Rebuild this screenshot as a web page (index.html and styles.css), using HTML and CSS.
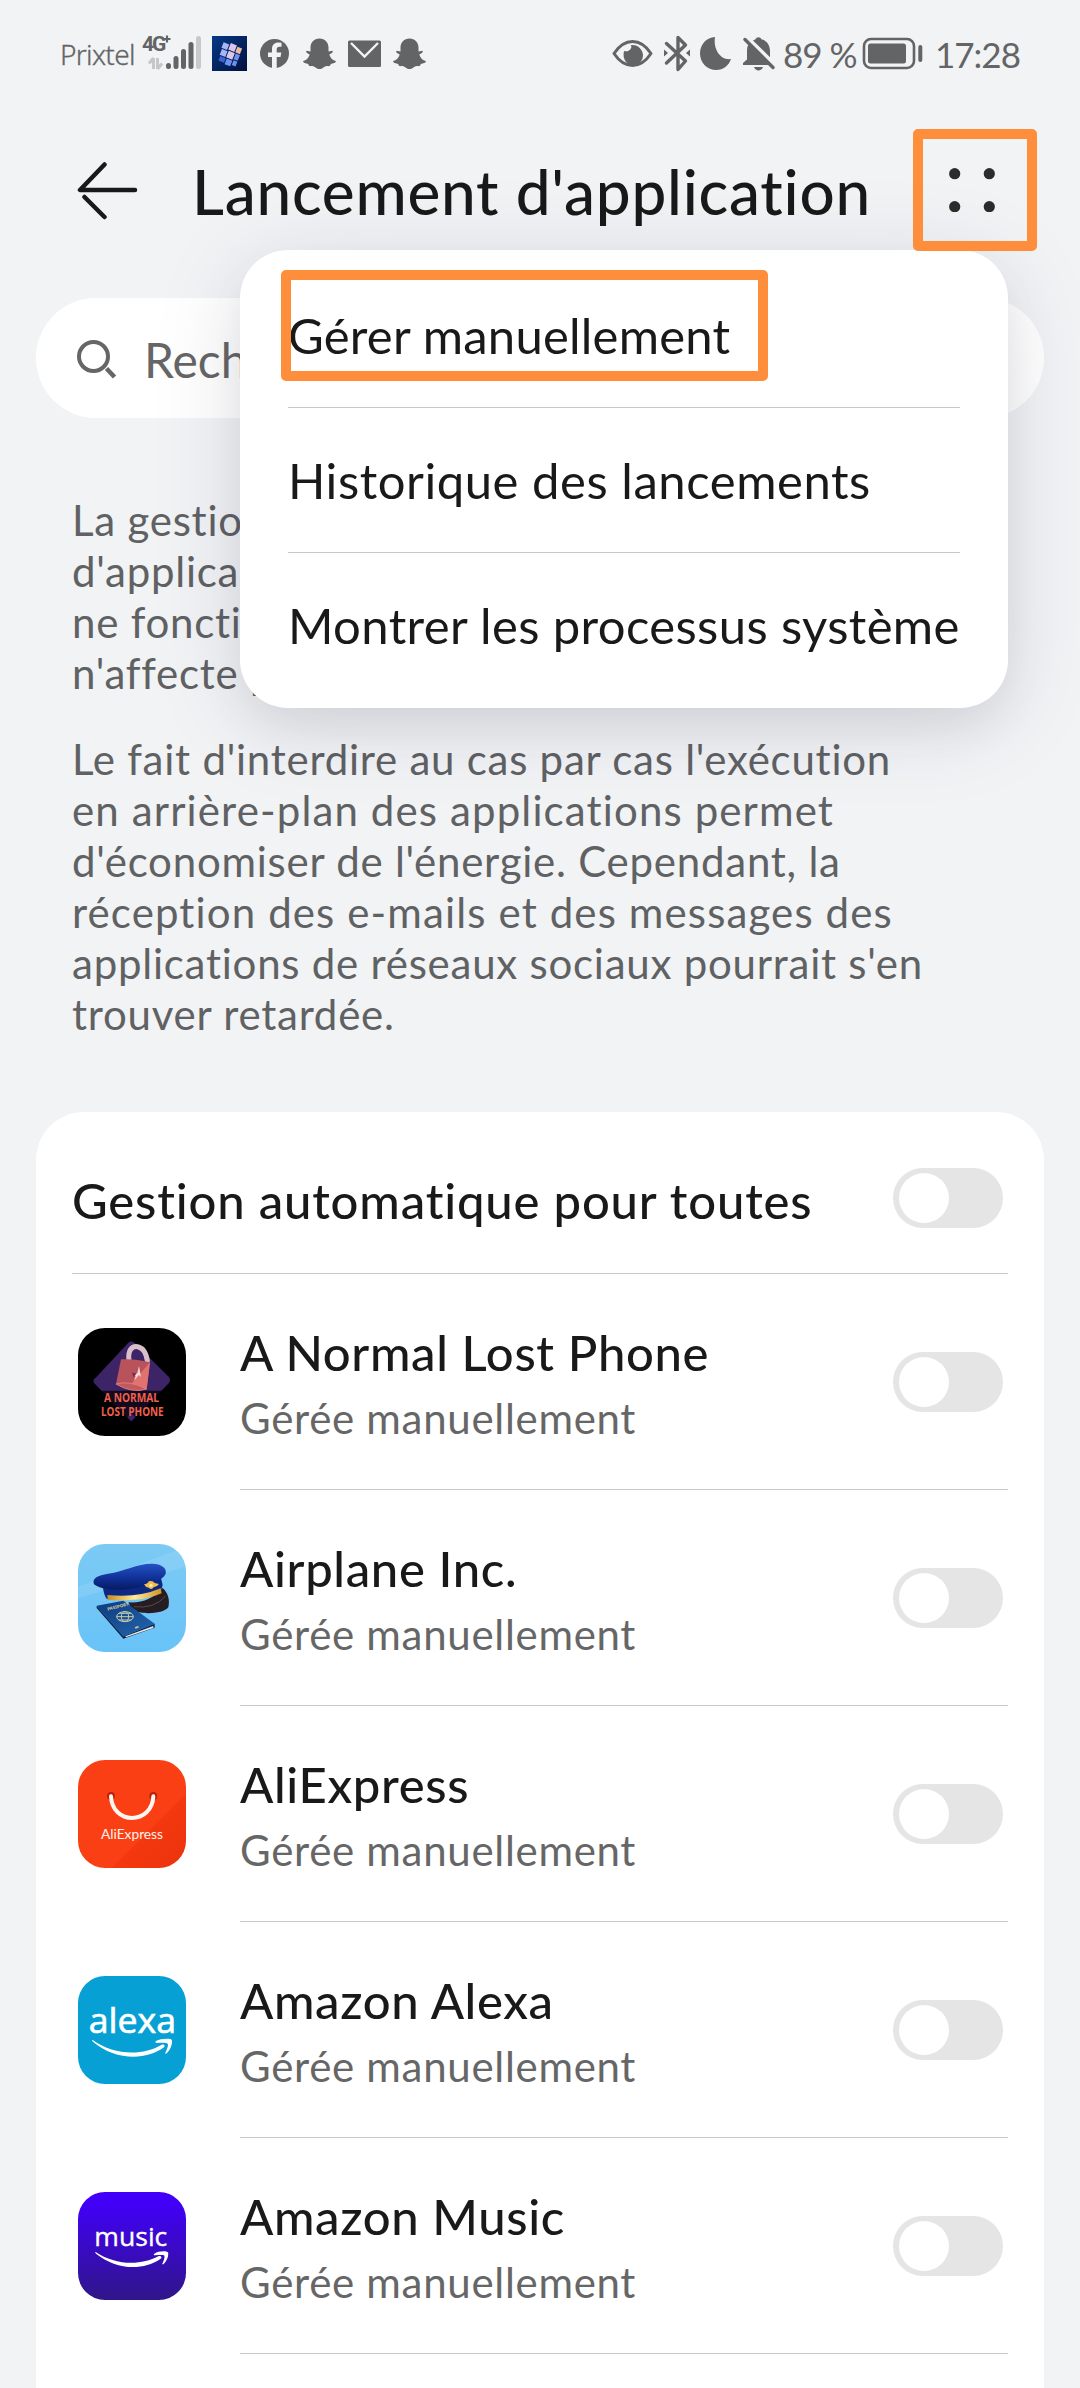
FILE: index.html
```html
<!DOCTYPE html>
<html lang="fr">
<head>
<meta charset="utf-8">
<title>Lancement d'application</title>
<link rel="stylesheet" href="styles.css">
</head>
<body>
<div class="screen">
  <div class="status">
    <span class="carrier">Prixtel</span>
    <svg width="62" height="48" viewBox="142 30 62 48">
      <text x="142" y="51" class="net">4G</text>
      <path d="M163.500 39h7M167 35.500v7" stroke="#636466" stroke-width="2.200"/>
      <path d="M153.500 58v11M149 63.500l4.500-5.500M157.500 58v11M162 63.500l-4.500 5.500" stroke="#c6c7c9" stroke-width="3" fill="none"/>
      <g stroke="#636466" stroke-width="5" stroke-linecap="round">
        <path d="M168.500 65.500v1M176 58.500v8M183.500 51.500v15M191 44.500v22"/><path d="M198.500 38.500v28" stroke="#c8c9cb"/>
      </g>
    </svg>
    <svg width="52" height="48" viewBox="204 30 52 48">
      <defs><linearGradient id="nb" x2="1" y2="1"><stop stop-color="#053a86"/><stop offset="1" stop-color="#02103c"/></linearGradient></defs>
      <path fill="url(#nb)" d="M212 36h35v35h-35z"/>
      <g transform="rotate(22 229 53)">
        <path fill="#a7b5f5" d="M220 45h6v6h-6zM221 52h6v6h-6z"/><path fill="#dcc6ea" d="M227 43h6.500v7H227zM228 51h6.500v7H228z"/><path fill="#f0b9a4" d="M234.500 44h5v6h-5z"/><path fill="#6d91ee" d="M235.500 51h4.500v6h-4.500zM229 59h6v6h-6zM236 58h4v5h-4z"/><path fill="#3e62d2" d="M222 59h6v5h-6z"/>
      </g>
    </svg>
    <svg width="40" height="48" viewBox="256 30 40 48">
      <circle cx="274.500" cy="53.500" r="14.500" fill="#636466"/>
      <path fill="#f1f3f5" d="M272 68.500V57h-4v-4.500h4v-3.500c0-4.300 2.500-6.500 6.300-6.500l3.200.3v4h-2c-2 0-2.800 1.100-2.800 2.500v3.200h4.600l-.8 4.500h-3.800v11.500z"/>
    </svg>
    <svg class="snap" width="46" height="48" viewBox="296 30 46 48"><path id="ghost" d="M319.500 38.500c5.500 0 9 4 9 9v4l3.800-.8c1.500 1-.3 2.700-3 3.700 1.200 4 3.500 5.700 6.500 6.700.3 2-3 2.500-5 3-.5 1-.4 1.800-1.400 2-2 .2-3.500-.4-5.200.8-1.500 1.200-3 2.100-4.700 2.100s-3.200-.9-4.700-2.100c-1.700-1.200-3.200-.6-5.200-.8-1-.2-.9-1-1.400-2-2-.5-5.300-1-5-3 3-1 5.300-2.700 6.500-6.700-2.700-1-4.500-2.700-3-3.700l3.800.8v-4c0-5 3.500-9 9-9z"/></svg>
    <svg width="46" height="48" viewBox="342 30 46 48">
      <rect x="348" y="40.500" width="33" height="26.500" rx="1.500" fill="#636466"/>
      <path d="M351 43l13.500 13.500L378 43" stroke="#f1f3f5" stroke-width="2.400" fill="none"/>
    </svg>
    <svg class="snap" width="46" height="48" viewBox="296 30 46 48"><use href="#ghost" x="-2"/></svg>
    <span class="spacer"></span>
    <svg width="172" height="48" viewBox="609 30 172 48" fill="none" stroke="#636466" stroke-width="3.400" stroke-linejoin="round" stroke-linecap="round">
      <path d="M614 53.500c5-7.500 11.500-12 18.500-12s13.500 4.500 18.500 12c-5 7.500-11.500 12-18.500 12s-13.500-4.500-18.500-12z" stroke-width="3"/>
      <path d="M631 45c1 3-.5 4.500-2 5.500s-3.500 1-5 .5c-2 8 3 14.500 9 14.500s10-5 10-10.500S637.500 44 631 45z" fill="#636466" stroke="none"/>
      <path d="M666.500 43.500l19 17.500-7.500 8.500v-32l7.500 7.500-19 18"/>
      <path d="M664 49.500v7l4-3.500zM690 49.500v7l-4-3.500z" fill="#636466" stroke="none"/>
      <path d="M715 37c-2 13 6 23.500 16 22-2 6.500-8 11-14.500 11-9.500 0-16.500-7.500-16.500-16.500S706.500 37.500 715 37z" fill="#636466" stroke="none"/>
      <path d="M743 65v-2l4-3.500V50c0-2 .5-4 1.500-6l21 21zM753 40.500l2.500-1.300c1-2.700 5-2.700 6 0 5.500 1.800 8.500 6.300 8.500 12v6zM754 67h9c-1.500 4.500-7.500 4.500-9 0z" fill="#636466" stroke="none"/>
      <path d="M745 39.500l28 28"/>
    </svg>
    <span class="battery">89 %</span>
    <svg width="64" height="48" viewBox="861 30 64 48">
      <rect x="864" y="39" width="50" height="29" rx="7" fill="none" stroke="#636466" stroke-width="2.600"/>
      <rect x="868" y="43.500" width="38" height="20" rx="2.500" fill="#636466"/>
      <path d="M920.300 47v13" stroke="#636466" stroke-width="4" stroke-linecap="round"/>
    </svg>
    <span class="clock">17:28</span>
  </div>

  <header class="header">
    <svg width="62" height="60" viewBox="76 160 62 60"><path d="M104.500 164.500L80 190h55M84.500 197l20 20" fill="none" stroke="#191919" stroke-width="4.500" stroke-linecap="round" stroke-linejoin="round"/></svg>
    <h1>Lancement d'application</h1>
    <div class="more">
      <svg width="46" height="44" viewBox="949 167 46 44" fill="#2b2c2e"><circle cx="954.700" cy="172.700" r="5.600"/><circle cx="989.300" cy="172.700" r="5.600"/><circle cx="954.700" cy="205.700" r="5.600"/><circle cx="989.300" cy="205.700" r="5.600"/></svg>
    </div>
  </header>

  <div class="search">
    <svg width="44" height="44" viewBox="75 336 44 44" fill="none" stroke="#666" stroke-width="4"><circle cx="93.500" cy="355.500" r="14.500"/><path d="M106.500 367.500l8 8.500" stroke-width="4.500"/></svg>
    <span>Rech</span>
  </div>

  <div class="info">
    <p>La gestio<br>d'applica<br>ne foncti<br>n'affecte p</p>
    <p>Le fait d'interdire au cas par cas l'exécution<br><span class="wide">en arrière-plan des applications permet</span><br>d'économiser de l'énergie. Cependant, la<br><span class="wide">réception des e-mails et des messages des</span><br>applications de réseaux sociaux pourrait s'en<br>trouver retardée.</p>
  </div>

  <main class="card">
    <div class="all"><span>Gestion automatique pour toutes</span><i class="switch"></i></div>

    <div class="app">
      <svg class="icon" viewBox="54 54 324 324">
        <path d="M54 54h324v324H54z"/>
        <path d="M110 200L205 98q9-7 18 0L326 200q8 10 0 20L220 330q-6 6-12 0L103 220q-8-10 7-20z" fill="#3c2467"/>
        <path d="M90 242h250l-115 95q-10 8-20 0z" opacity=".7"/>
        <path d="M202 322l12-12 12 12-12 12z" fill="#3c2467"/>
        <path d="M207 150c-4-28 8-43 26-40 16 3 25 16 29 42" fill="none" stroke="#d9bfc9" stroke-width="15" stroke-linecap="round"/>
        <path d="M183 148q40-3 87 9l-10 80q-45 14-92-15z" fill="#b9535b"/>
        <path d="M270 157l-10 80q-28 9-57-2z" fill="#e0736f"/>
        <path d="M168 222q40-12 92 15-45 14-92-15z" fill="#c4595c" stroke="#e88f88" stroke-width="2"/>
        <path d="M237 168l-5 22-16 2 11 6-5 14 15-17 6 6z" fill="#f9dcda"/><path d="M215 188l15 2-9 12z" fill="#7e2c45"/>
        <text x="132" y="276" class="lost" textLength="165" lengthAdjust="spacingAndGlyphs">A NORMAL</text>
        <text x="123" y="317" class="lost" textLength="188" lengthAdjust="spacingAndGlyphs">LOST PHONE</text>
      </svg>
      <div class="label"><b>A Normal Lost Phone</b><small>Gérée manuellement</small></div><i class="switch"></i>
    </div>

    <div class="app">
      <svg class="icon" viewBox="54 57 324 324">
        <defs>
          <linearGradient id="sky" x2="0" y2="1"><stop stop-color="#7ccaf4"/><stop offset="1" stop-color="#68c3f8"/></linearGradient>
          <linearGradient id="cap" x2="0" y2="1"><stop stop-color="#2452c4"/><stop offset=".6" stop-color="#0f2e93"/><stop offset="1" stop-color="#071a62"/></linearGradient>
          <linearGradient id="gold"><stop stop-color="#c98c21"/><stop offset=".5" stop-color="#ffe999"/><stop offset="1" stop-color="#d09423"/></linearGradient>
          <linearGradient id="pass" x2="1" y2="1"><stop stop-color="#0d3a80"/><stop offset="1" stop-color="#2466ad"/></linearGradient>
        </defs>
        <path fill="url(#sky)" d="M54 57h324v324H54z"/>
        <path d="M54 185L378 65v60L54 220z" fill="#fff" opacity=".1"/>
        <path d="M205 232q60 5 103-43c17 15 22 37 17 58-17 22-88 23-110 6z" fill="#251d22"/>
        <path d="M222 245q60 8 95-32" fill="none" stroke="#57494b" stroke-width="3"/>
        <path d="M128 180l175-20 5 20-7 25q-60 25-160 17-10-10-13-42z" fill="#0c2883"/>
        <path d="M102 178c-7-19 12-27 42-32 50-7 85-30 132-30 28 0 45 13 41 30-8 22-68 42-118 47-48 5-80-3-97-15z" fill="url(#cap)"/>
        <path d="M142 210q90 10 160-20l3 15q-60 28-162 19z" fill="url(#gold)"/>
        <path d="M252 178q12-1 14-9 12-4 18 5l13 3q-7 10-16 10-6 9-15 1-10-1-14-10z" fill="#f2bd49"/><circle cx="273" cy="181" r="5" fill="#fff0ac"/>
        <path d="M110 242l80-15 94 69-94 38z" fill="url(#pass)"/>
        <path d="M190 334l94-38v12l-94 33-80-92v-7z" fill="#0b2550"/><path d="M196 334l84-31v6l-82 28z" fill="#e8e8e4"/>
        <text transform="translate(143 257) rotate(-14)" class="passport">PASSPORT</text>
        <g fill="none" stroke="#c5cda8" stroke-width="3"><ellipse cx="195" cy="275" rx="25" ry="15"/><ellipse cx="195" cy="275" rx="11" ry="15"/><path d="M170 275h50M177 265h36M177 285h36"/></g>
        <path d="M224 307l10-4 3 4-10 4z" fill="#dfc880"/>
      </svg>
      <div class="label"><b>Airplane Inc.</b><small>Gérée manuellement</small></div><i class="switch"></i>
    </div>

    <div class="app">
      <svg class="icon" viewBox="54 60 324 324">
        <defs><linearGradient id="ali" x2="1" y2="1"><stop offset=".65" stop-color="#fb3f14"/><stop offset=".66" stop-color="#f4380f"/><stop offset="1" stop-color="#ea330c"/></linearGradient></defs>
        <path fill="url(#ali)" d="M54 60h324v324H54z"/>
        <circle cx="153" cy="168" r="12" fill="#b9240a"/><circle cx="280" cy="168" r="12" fill="#b9240a"/>
        <path d="M153 169c2 41 30 65 63 65s62-24 64-65" fill="none" stroke="#fff6f1" stroke-width="12" stroke-linecap="round"/>
        <text x="123" y="297" class="ali" textLength="186" lengthAdjust="spacingAndGlyphs">AliExpress</text>
      </svg>
      <div class="label"><b>AliExpress</b><small>Gérée manuellement</small></div><i class="switch"></i>
    </div>

    <div class="app">
      <svg class="icon" viewBox="54 48 324 324">
        <path fill="#07a0d5" d="M54 48h324v324H54z"/>
        <text x="86" y="220" class="alexa" textLength="262" lengthAdjust="spacingAndGlyphs">alexa</text>
        <path d="M98 240c65 47 150 48 207 14 5-3 12 3 7 8-58 42-150 37-213-17-4-4-3-6-1-5z" fill="#fff"/>
        <path d="M288 243c13-8 43-9 47-4 4 8-3 32-17 42-3 1-3-1-1-4 5-12 9-22 6-26-4-4-20-3-32-2-5 0-6-4-3-6z" fill="#fff"/>
      </svg>
      <div class="label"><b>Amazon Alexa</b><small>Gérée manuellement</small></div><i class="switch"></i>
    </div>

    <div class="app">
      <svg class="icon" viewBox="54 51 324 324">
        <defs><linearGradient id="mus" x2="0" y2="1"><stop offset=".1" stop-color="#4200f8"/><stop offset="1" stop-color="#2f1688"/></linearGradient></defs>
        <path fill="url(#mus)" d="M54 51h324v324H54z"/>
        <text x="103" y="212" class="music" textLength="219" lengthAdjust="spacingAndGlyphs">music</text>
        <path d="M107 231c55 38 133 43 188 13 6-3 14 3 6 8-55 37-135 31-193-16-3-3-3-6-1-5z" fill="#fff"/>
        <path d="M283 236c13-9 36-9 41-4 3 8-3 27-14 36-3 1-4-1-2-4 4-9 7-19 5-22-4-3-18-1-28-1-4 0-5-3-2-5z" fill="#fff"/>
      </svg>
      <div class="label"><b>Amazon Music</b><small>Gérée manuellement</small></div><i class="switch"></i>
    </div>
  </main>

  <div class="menu">
    <div class="item m1">Gérer manuellement</div>
    <div class="item m2">Historique des lancements</div>
    <div class="item m3">Montrer les processus système</div>
  </div>
  <div class="mark mark-more"></div>
  <div class="mark mark-item"></div>
</div>
</body>
</html>
```
FILE: styles.css
```css
* { box-sizing: border-box; }
body { margin: 0; background: #f1f3f5; font-family: Lato, "Noto Sans", sans-serif; color: #191919; font-variant-ligatures: none; }
svg { display: block; flex: none; }
.screen { position: relative; height: 2388px; overflow: hidden; display: flex; flex-direction: column; }

.status { height: 108px; flex: none; display: flex; align-items: center; padding-left: 60px; color: #636466; white-space: nowrap; }
.carrier { width: 82px; font: 300 28px/48px "Noto Sans", sans-serif; letter-spacing: -.7px; -webkit-text-stroke: .3px #636466; }
.net { font: bold 21px "Roboto", sans-serif; fill: #636466; letter-spacing: -2px; }
.snap { fill: #636466; }
.spacer { width: 175px; }
.battery { width: 80px; padding-left: 2px; font-size: 35px; letter-spacing: -1px; }
.clock { padding-left: 10px; font-size: 35px; letter-spacing: -1px; }

.header { height: 164px; flex: none; display: flex; align-items: center; padding: 0 85px 0 76px; }
h1 { margin: 0 0 0 54px; padding-top: 2px; font-size: 62px; font-weight: 500; line-height: 80px; letter-spacing: .78px; white-space: nowrap; }
.more { margin-left: auto; }

.search { height: 120px; flex: none; margin: 26px 36px 0; padding: 2px 39px 0; border-radius: 60px; background: #fff; display: flex; align-items: center; gap: 25px; color: #666; font-size: 48px; }

.info { margin: 77px 72px 0; flex: none; color: #606163; font-size: 42px; line-height: 51px; letter-spacing: .76px; white-space: nowrap; }
.info p { margin: 0 0 35px; }
.wide { letter-spacing: 1.13px; }

.card { margin: 37px 36px 0; padding: 0 36px; height: 1400px; flex: none; background: #fff; border-radius: 48px 48px 0 0; }
.all { height: 162px; padding: 10px 5px 0 0; border-bottom: 1px solid #c9c9c9; display: flex; align-items: center; justify-content: space-between; }
.all span { font-size: 49px; font-weight: 500; line-height: 60px; letter-spacing: .83px; padding-top: 4px; }
.switch { width: 110px; height: 60px; border-radius: 30px; background: #e5e5e5; padding: 5px 6px; flex: none; }
.switch::before { content: ""; display: block; width: 50px; height: 50px; border-radius: 50%; background: #fff; }
.app { height: 216px; display: flex; align-items: center; padding: 0 5px 0 6px; background: linear-gradient(#c9c9c9, #c9c9c9) right bottom / 768px 1px no-repeat; }
.icon { width: 108px; height: 108px; border-radius: 27px; margin-right: 54px; }
.label { flex: 1; display: flex; flex-direction: column; gap: 11px; padding-top: 2px; }
.label b { font-size: 49px; font-weight: 500; line-height: 60px; letter-spacing: .65px; }
.label small { font-size: 42px; line-height: 51px; letter-spacing: .7px; color: #666; }

.lost { font: bold 37px "Open Sans", sans-serif; fill: #f0604c; }
.passport { font: bold 13px "Noto Sans", sans-serif; fill: #d4cf9e; }
.ali { font: 40px Lato, sans-serif; fill: #fff4ec; }
.alexa { font: 106px "Open Sans", sans-serif; fill: #fff; stroke: #fff; stroke-width: 2px; }
.music { font: 79px "Open Sans", sans-serif; fill: #fff; stroke: #fff; stroke-width: 1px; }

.menu { position: absolute; left: 240px; top: 250px; width: 768px; height: 458px; padding: 12px 48px; border-radius: 48px; background: #fff; box-shadow: 0 14px 90px rgba(30, 34, 70, .13), 0 22px 40px rgba(0, 0, 0, .05); }
.item { height: 145px; display: flex; align-items: center; font-size: 49px; white-space: nowrap; }
.item + .item { border-top: 1px solid #c9c9c9; }
.m1 { letter-spacing: .22px; }
.m2 { letter-spacing: .55px; }
.m3 { letter-spacing: .37px; }

.mark { position: absolute; border: 10px solid #ff8e3c; border-radius: 5px; }
.mark-more { left: 913px; top: 129px; width: 124px; height: 122px; }
.mark-item { left: 281px; top: 270px; width: 487px; height: 111px; }
```
